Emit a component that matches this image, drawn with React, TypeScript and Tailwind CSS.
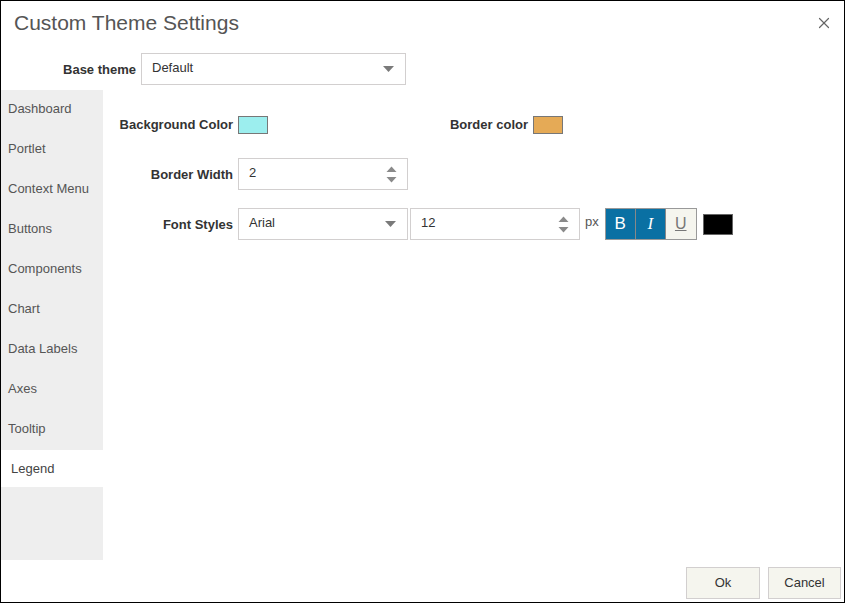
import { X } from 'lucide-react';

const navItems = [
  'Dashboard',
  'Portlet',
  'Context Menu',
  'Buttons',
  'Components',
  'Chart',
  'Data Labels',
  'Axes',
  'Tooltip',
  'Legend',
];

function Caret() {
  return (
    <svg width="11" height="6" viewBox="0 0 11 6" className="shrink-0">
      <path d="M0 0 L11 0 L5.5 6 Z" fill="#7a7a7a" />
    </svg>
  );
}

function Spinner() {
  return (
    <svg width="11" height="17" viewBox="0 0 11 17" className="shrink-0">
      <path d="M0.5 6 L10.5 6 L5.5 0.5 Z" fill="#8a8a8a" />
      <path d="M0.5 11 L10.5 11 L5.5 16.5 Z" fill="#8a8a8a" />
    </svg>
  );
}

function SelectBox({ value, width }: { value: string; width: string }) {
  return (
    <div className={`${width} h-[32px] border border-[#d2cfcf] bg-white flex items-center justify-between pl-[10px] pr-[11px]`}>
      <span className="text-[13px] text-[#333] -mt-[3px]">{value}</span>
      <Caret />
    </div>
  );
}

function NumberBox({ value }: { value: string }) {
  return (
    <div className="w-[170px] h-[32px] border border-[#d2cfcf] bg-white flex items-center justify-between pl-[10px] pr-[10px]">
      <span className="text-[13px] text-[#333] -mt-[3px]">{value}</span>
      <Spinner />
    </div>
  );
}

function App() {
  return (
    <div className="w-[845px] h-[603px] border border-black bg-white flex flex-col font-['Liberation_Sans',Arial,sans-serif] overflow-hidden">
      {/* Header */}
      <div className="flex items-center justify-between h-[42px] pl-[13px] pr-[11px] pt-[1px]">
        <h1 className="text-[21px] text-[#555] font-normal">Custom Theme Settings</h1>
        <X className="w-[18px] h-[18px] text-[#666]" strokeWidth={1.6} />
      </div>

      {/* Base theme */}
      <div className="flex items-center mt-[10px] h-[32px]">
        <label className="w-[135px] text-right text-[13px] font-bold text-[#333] mt-[2px]">Base theme</label>
        <div className="ml-[5px]">
          <SelectBox value="Default" width="w-[265px]" />
        </div>
      </div>

      <div className="flex flex-1 mt-[5px]">
        {/* Sidebar */}
        <div className="w-[102px] h-[470px] bg-[#eeeeee] flex flex-col">
          {navItems.map((item) =>
            item === 'Legend' ? (
              <div key={item} className="h-[37px] bg-white flex items-center pl-[10px] text-[13px] text-[#444]">
                {item}
              </div>
            ) : (
              <div key={item} className="h-[40px] flex items-center pl-[7px] pb-[3px] text-[13px] text-[#555]">
                {item}
              </div>
            )
          )}
        </div>

        {/* Content */}
        <div className="flex-1 flex flex-col pt-[25px]">
          <div className="flex items-center h-[19px]">
            <label className="w-[130px] text-right text-[13px] font-bold text-[#333]">Background Color</label>
            <div className="ml-[5px] w-[30px] h-[18px] bg-[#9ceeee] border border-[#777]" />
            <label className="w-[260px] text-right text-[13px] font-bold text-[#333]">Border color</label>
            <div className="ml-[5px] w-[30px] h-[18px] bg-[#e5aa56] border border-[#777]" />
          </div>

          <div className="flex items-center mt-[24px]">
            <label className="w-[130px] text-right text-[13px] font-bold text-[#333] mt-[1px]">Border Width</label>
            <div className="ml-[5px]">
              <NumberBox value="2" />
            </div>
          </div>

          <div className="flex items-center mt-[18px]">
            <label className="w-[130px] text-right text-[13px] font-bold text-[#333] mt-[1px]">Font Styles</label>
            <div className="ml-[5px]">
              <SelectBox value="Arial" width="w-[170px]" />
            </div>
            <div className="ml-[2px]">
              <NumberBox value="12" />
            </div>
            <span className="ml-[5px] text-[13px] text-[#555] -mt-[5px]">px</span>
            <div className="ml-[6px] flex h-[32px] border border-[#999]">
              <button className="w-[30px] h-full bg-[#0a70a3] text-white text-[17px] flex items-center justify-center border-r border-[#888]">
                B
              </button>
              <button className="w-[30px] h-full bg-[#0a70a3] text-white text-[17px] italic font-['Liberation_Serif',serif] flex items-center justify-center border-r border-[#888]">
                I
              </button>
              <button className="w-[30px] h-full bg-[#f5f5ee] text-[#777] text-[16px] underline flex items-center justify-center">
                U
              </button>
            </div>
            <div className="ml-[6px] w-[30px] h-[21px] bg-black border border-[#666]" />
          </div>
        </div>
      </div>

      {/* Footer */}
      <div className="flex justify-end gap-[8px] pr-[3px] pb-[3px]">
        <button className="w-[74px] h-[32px] bg-[#f5f5ee] border border-[#d2cfcf] text-[13px] text-[#333]">Ok</button>
        <button className="w-[73px] h-[32px] bg-[#f5f5ee] border border-[#d2cfcf] text-[13px] text-[#333]">Cancel</button>
      </div>
    </div>
  );
}

export default App;
